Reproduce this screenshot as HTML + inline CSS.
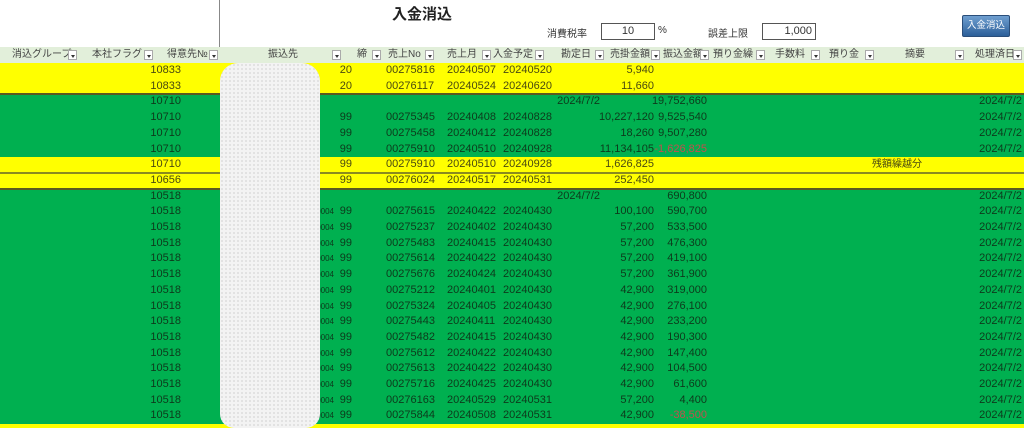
<!DOCTYPE html>
<html><head><meta charset="utf-8"><style>
*{margin:0;padding:0;box-sizing:border-box}
body{width:1024px;height:428px;overflow:hidden;background:#fff;font-family:"Liberation Sans","Noto Sans CJK JP",sans-serif;font-size:11px;position:relative;color:#333}
.a{position:absolute;white-space:nowrap}
.r{position:absolute;left:0;width:1024px;height:16px;line-height:15px}
.y{background:#ffff00;color:#4a4a10}
.g{background:#00b050;color:#0d3a1c}
.r span{position:absolute;top:0}
.k{right:843px}.s{right:672px}.n{left:386px}.m{left:447px}.p{left:503px}.d{right:424px}.u{right:370px}.f{right:317px}.z{right:2px}.o{right:690px;font-size:8px}
.red{color:#c0504d}
.hdr{position:absolute;top:47px;left:0;width:1024px;height:16px;background:#e2efda;color:#444;font-size:10px;line-height:16px}
.hdr span{position:absolute}
.b{position:absolute;top:3px;width:9px;height:10px;border:1px solid #aaa;background:#fff}
.b:after{content:"";position:absolute;left:2px;top:4px;border:2px solid transparent;border-top:3px solid #333}
</style></head><body>
<div class="a" style="left:219px;top:0;width:1px;height:63px;background:#888"></div>
<div class="a" style="left:392px;top:3px;font-size:15px;font-weight:bold;color:#222">入金消込</div>
<div class="a" style="left:547px;top:25px;font-size:10px">消費税率</div>
<div class="a" style="left:601px;top:23px;width:54px;height:17px;border:1px solid #555;text-align:center;line-height:15px">10</div>
<div class="a" style="left:658px;top:25px;font-size:10px">%</div>
<div class="a" style="left:708px;top:25px;font-size:10px">誤差上限</div>
<div class="a" style="left:762px;top:23px;width:54px;height:17px;border:1px solid #555;text-align:right;padding-right:3px;line-height:15px">1,000</div>
<div class="a" style="left:962px;top:15px;width:48px;height:22px;background:linear-gradient(#6f9fd0,#2c5f99);border:1px solid #2a4e7a;border-radius:2px;color:#fff;font-size:9.5px;text-align:center;line-height:20px">入金消込</div>

<div class="hdr">
<span style="left:12px">消込グループ</span><i class="b" style="left:68px"></i>
<span style="left:92px">本社フラグ</span><i class="b" style="left:144px"></i>
<span style="left:167px">得意先№</span><i class="b" style="left:209px"></i>
<span style="left:268px">振込先</span><i class="b" style="left:332px"></i>
<span style="left:357px">締</span><i class="b" style="left:372px"></i>
<span style="left:388px">売上No</span><i class="b" style="left:425px"></i>
<span style="left:447px">売上月</span><i class="b" style="left:482px"></i>
<span style="left:493px">入金予定</span><i class="b" style="left:535px"></i>
<span style="left:561px">勘定日</span><i class="b" style="left:595px"></i>
<span style="left:610px">売掛金額</span><i class="b" style="left:651px"></i>
<span style="left:663px">振込金額</span><i class="b" style="left:700px"></i>
<span style="left:713px">預り金繰</span><i class="b" style="left:756px"></i>
<span style="left:775px">手数料</span><i class="b" style="left:811px"></i>
<span style="left:829px">預り金</span><i class="b" style="left:865px"></i>
<span style="left:905px">摘要</span><i class="b" style="left:955px"></i>
<span style="left:975px">処理済日</span><i class="b" style="left:1013px"></i>
</div>

<div class="r y" style="top:63px"><span class="k">10833</span><span class="s">20</span><span class="n">00275816</span><span class="m">20240507</span><span class="p">20240520</span><span class="u">5,940</span></div>
<div class="r y" style="top:79px"><span class="k">10833</span><span class="s">20</span><span class="n">00276117</span><span class="m">20240524</span><span class="p">20240620</span><span class="u">11,660</span></div>
<div class="r g" style="top:94px"><span class="k">10710</span><span class="d">2024/7/2</span><span class="f">19,752,660</span><span class="z">2024/7/2</span></div>
<div class="r g" style="top:110px"><span class="k">10710</span><span class="s">99</span><span class="n">00275345</span><span class="m">20240408</span><span class="p">20240828</span><span class="u">10,227,120</span><span class="f">9,525,540</span><span class="z">2024/7/2</span></div>
<div class="r g" style="top:126px"><span class="k">10710</span><span class="s">99</span><span class="n">00275458</span><span class="m">20240412</span><span class="p">20240828</span><span class="u">18,260</span><span class="f">9,507,280</span><span class="z">2024/7/2</span></div>
<div class="r g" style="top:142px"><span class="k">10710</span><span class="s">99</span><span class="n">00275910</span><span class="m">20240510</span><span class="p">20240928</span><span class="u">11,134,105</span><span class="f red">-1,626,825</span><span class="z">2024/7/2</span></div>
<div class="r y" style="top:157px"><span class="k">10710</span><span class="s">99</span><span class="n">00275910</span><span class="m">20240510</span><span class="p">20240928</span><span class="u">1,626,825</span><span style="left:872px;font-size:10px">残額繰越分</span></div>
<div class="r y" style="top:173px"><span class="k">10656</span><span class="s">99</span><span class="n">00276024</span><span class="m">20240517</span><span class="p">20240531</span><span class="u">252,450</span></div>
<div class="r g" style="top:189px"><span class="k">10518</span><span class="d">2024/7/2</span><span class="f">690,800</span><span class="z">2024/7/2</span></div>
<div class="r g" style="top:204px"><span class="k">10518</span><span class="o">0004</span><span class="s">99</span><span class="n">00275615</span><span class="m">20240422</span><span class="p">20240430</span><span class="u">100,100</span><span class="f">590,700</span><span class="z">2024/7/2</span></div>
<div class="r g" style="top:220px"><span class="k">10518</span><span class="o">0004</span><span class="s">99</span><span class="n">00275237</span><span class="m">20240402</span><span class="p">20240430</span><span class="u">57,200</span><span class="f">533,500</span><span class="z">2024/7/2</span></div>
<div class="r g" style="top:236px"><span class="k">10518</span><span class="o">0004</span><span class="s">99</span><span class="n">00275483</span><span class="m">20240415</span><span class="p">20240430</span><span class="u">57,200</span><span class="f">476,300</span><span class="z">2024/7/2</span></div>
<div class="r g" style="top:251px"><span class="k">10518</span><span class="o">0004</span><span class="s">99</span><span class="n">00275614</span><span class="m">20240422</span><span class="p">20240430</span><span class="u">57,200</span><span class="f">419,100</span><span class="z">2024/7/2</span></div>
<div class="r g" style="top:267px"><span class="k">10518</span><span class="o">0004</span><span class="s">99</span><span class="n">00275676</span><span class="m">20240424</span><span class="p">20240430</span><span class="u">57,200</span><span class="f">361,900</span><span class="z">2024/7/2</span></div>
<div class="r g" style="top:283px"><span class="k">10518</span><span class="o">0004</span><span class="s">99</span><span class="n">00275212</span><span class="m">20240401</span><span class="p">20240430</span><span class="u">42,900</span><span class="f">319,000</span><span class="z">2024/7/2</span></div>
<div class="r g" style="top:299px"><span class="k">10518</span><span class="o">0004</span><span class="s">99</span><span class="n">00275324</span><span class="m">20240405</span><span class="p">20240430</span><span class="u">42,900</span><span class="f">276,100</span><span class="z">2024/7/2</span></div>
<div class="r g" style="top:314px"><span class="k">10518</span><span class="o">0004</span><span class="s">99</span><span class="n">00275443</span><span class="m">20240411</span><span class="p">20240430</span><span class="u">42,900</span><span class="f">233,200</span><span class="z">2024/7/2</span></div>
<div class="r g" style="top:330px"><span class="k">10518</span><span class="o">0004</span><span class="s">99</span><span class="n">00275482</span><span class="m">20240415</span><span class="p">20240430</span><span class="u">42,900</span><span class="f">190,300</span><span class="z">2024/7/2</span></div>
<div class="r g" style="top:346px"><span class="k">10518</span><span class="o">0004</span><span class="s">99</span><span class="n">00275612</span><span class="m">20240422</span><span class="p">20240430</span><span class="u">42,900</span><span class="f">147,400</span><span class="z">2024/7/2</span></div>
<div class="r g" style="top:361px"><span class="k">10518</span><span class="o">0004</span><span class="s">99</span><span class="n">00275613</span><span class="m">20240422</span><span class="p">20240430</span><span class="u">42,900</span><span class="f">104,500</span><span class="z">2024/7/2</span></div>
<div class="r g" style="top:377px"><span class="k">10518</span><span class="o">0004</span><span class="s">99</span><span class="n">00275716</span><span class="m">20240425</span><span class="p">20240430</span><span class="u">42,900</span><span class="f">61,600</span><span class="z">2024/7/2</span></div>
<div class="r g" style="top:393px"><span class="k">10518</span><span class="o">0004</span><span class="s">99</span><span class="n">00276163</span><span class="m">20240529</span><span class="p">20240531</span><span class="u">57,200</span><span class="f">4,400</span><span class="z">2024/7/2</span></div>
<div class="r g" style="top:408px"><span class="k">10518</span><span class="o">0004</span><span class="s">99</span><span class="n">00275844</span><span class="m">20240508</span><span class="p">20240531</span><span class="u">42,900</span><span class="f red">-38,500</span><span class="z">2024/7/2</span></div>
<div class="a" style="left:0;top:424px;width:1024px;height:4px;background:#ffff00"></div>

<div class="a" style="left:0;top:93px;width:1024px;height:2px;background:#5a5a20"></div>
<div class="a" style="left:0;top:172px;width:1024px;height:2px;background:#8a8a20"></div>
<div class="a" style="left:0;top:188px;width:1024px;height:2px;background:#5a5a20"></div>

<div class="a" style="left:220px;top:63px;width:100px;height:365px;border-radius:18px 18px 14px 14px;background-color:#f3f3f3;background-image:radial-gradient(#dcdcdc 0.8px,transparent 1px);background-size:4px 4px"></div>
</body></html>
